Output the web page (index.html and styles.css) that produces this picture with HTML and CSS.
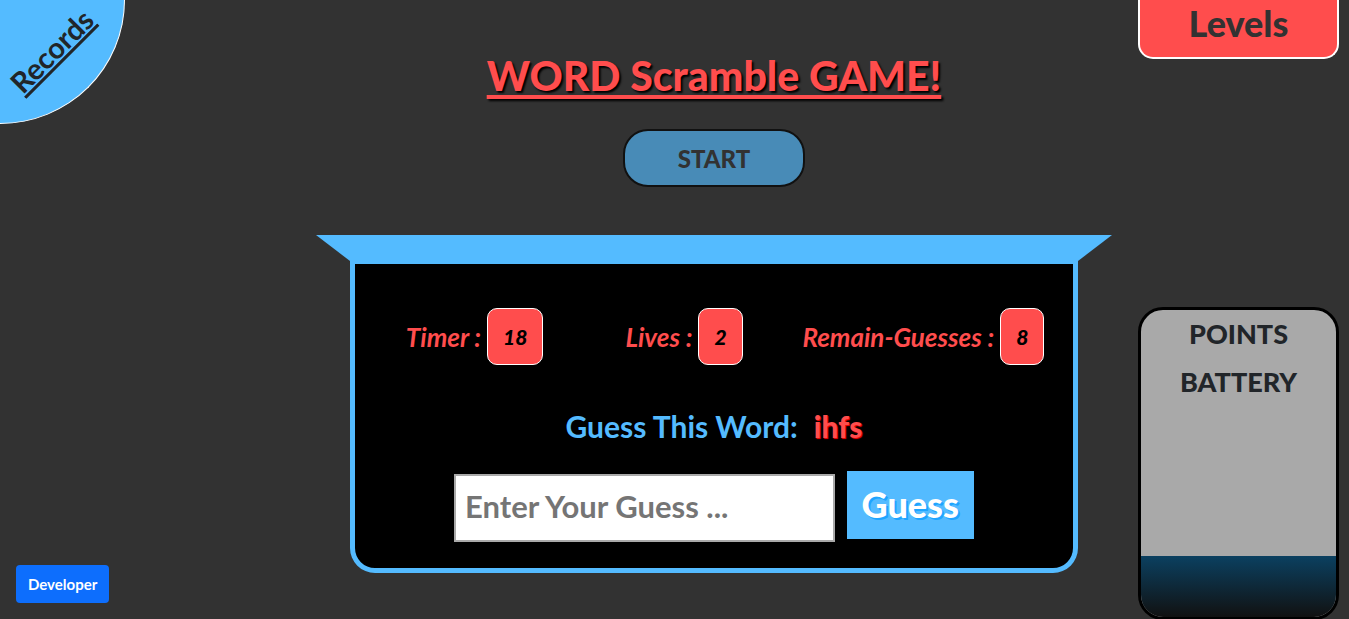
FILE: index.html
```html
<!DOCTYPE html>
<html lang="en">
<head>
<meta charset="utf-8">
<meta name="viewport" content="width=device-width, initial-scale=1">
<title>Word Scramble Game</title>
<link rel="stylesheet" href="styles.css">
</head>
<body>
<div class="page">
  <aside class="left">
    <a class="records" href="#records"><span class="records-text">Records</span></a>
    <button class="developer" type="button">Developer</button>
  </aside>
  <main class="center">
    <h1 class="title">WORD Scramble GAME!</h1>
    <button class="start" type="button" disabled>START</button>
    <section class="game">
      <div class="lid"></div>
      <div class="box">
        <div class="stats">
          <div class="stat"><span>Timer :</span><output class="value">18</output></div>
          <div class="stat"><span>Lives :</span><output class="value">2</output></div>
          <div class="stat"><span>Remain-Guesses :</span><output class="value">8</output></div>
        </div>
        <h2 class="prompt"><label for="guess">Guess This Word:</label><span class="word">ihfs</span></h2>
        <form class="guess-form">
          <input class="guess-input" id="guess" type="text" placeholder="Enter Your Guess ...">
          <button class="guess-button" type="button">Guess</button>
        </form>
      </div>
    </section>
  </main>
  <aside class="right">
    <button class="levels" type="button">Levels</button>
    <section class="battery">
      <h2 class="battery-title">POINTS<br>BATTERY</h2>
      <div class="charge" style="height: 20%"></div>
    </section>
  </aside>
</div>
</body>
</html>
```
FILE: styles.css
```css
* { box-sizing: border-box; }

body {
  margin: 0;
  background: #323232;
  color: #212529;
  font-family: Lato, "Liberation Sans", sans-serif;
  font-weight: 700;
  overflow: hidden;
}

h1, h2 { margin: 0; }
button, input { font: inherit; }

.page {
  display: grid;
  grid-template-columns: 350fr 728fr 271fr;
  min-height: 100vh;
}

.left, .right {
  display: flex;
  flex-direction: column;
  justify-content: space-between;
}

.left { align-items: flex-start; }

.records {
  display: flex;
  align-items: center;
  justify-content: center;
  width: 125px;
  height: 124px;
  padding: 0 20px 22px 0;
  background: #54bbff;
  border: solid #fff;
  border-width: 0 1px 1px 0;
  border-bottom-right-radius: 100%;
  color: #212529;
  font-size: 29px;
  line-height: 30px;
}

.records-text {
  transform: rotate(-45deg);
  text-decoration: underline;
  text-decoration-thickness: 3px;
}

.developer {
  margin: 16px;
  padding: 0 12px;
  height: 38px;
  border: 0;
  border-radius: 4px;
  background: #0d6efd;
  color: #fff;
  font-size: 15px;
}

.center {
  display: flex;
  flex-direction: column;
  align-items: center;
  min-width: 0;
}

.title {
  margin-top: 46px;
  color: #ff4d4d;
  font-size: 41px;
  font-weight: 900;
  line-height: 60px;
  text-decoration: underline;
  text-decoration-thickness: 4px;
  text-underline-offset: 4px;
  text-shadow: 2px 2px 2px #000;
  white-space: nowrap;
}

.start {
  width: 25%;
  height: 58px;
  margin-top: 23px;
  border: 2px solid #111;
  border-radius: 25px;
  background: #488bb7;
  color: #323232;
  font-size: 24px;
  font-weight: 900;
}

.game {
  align-self: stretch;
  margin-top: 48px;
}

.lid {
  height: 26px;
  margin: 0 -34px;
  background: #54bbff;
  clip-path: polygon(0 0, 100% 0, calc(100% - 34px) 100%, 34px 100%);
}

.box {
  padding: 44px 0 26px;
  background: #000;
  border: 5px solid #54bbff;
  border-top-width: 3px;
  border-radius: 0 0 25px 25px;
}

.stats {
  display: grid;
  grid-template-columns: 4fr 3fr 5fr;
}

.stat {
  display: flex;
  align-items: center;
  justify-content: center;
  gap: 6px;
  color: #ff4d4d;
  font-size: 26px;
  font-style: italic;
  white-space: nowrap;
}

.value {
  padding: 0 15px;
  border: 1px solid #fff;
  border-radius: 10px;
  background: #ff4d4d;
  color: #000;
  font-size: 21px;
  font-weight: 900;
  line-height: 55px;
}

.prompt {
  display: flex;
  justify-content: center;
  gap: 16px;
  margin: 37px 0 21px;
  color: #54bbff;
  font-size: 30px;
  line-height: 48px;
}

.word {
  color: #ff4d4d;
  font-weight: 900;
  text-shadow: 1px 1px 1px #f00;
}

.guess-form {
  display: flex;
  align-items: baseline;
  justify-content: center;
  gap: 12px;
}

.guess-input {
  width: 53%;
  height: 68px;
  padding: 0 9px 4px;
  border: 2px solid #a9a9a9;
  background: #fff;
  color: #212529;
  font-size: 31px;
}

.guess-input::placeholder { color: #757575; opacity: 1; }

.guess-button {
  height: 68px;
  padding: 0 15px 2px;
  border: 0;
  background: #54bbff;
  color: #fff;
  font-size: 36px;
  font-weight: 900;
  text-shadow: 2px 2px 0 #1fa5ff;
}

.right {
  padding: 0 10px 0 60px;
}

.levels {
  height: 59px;
  padding: 0 0 12px;
  border: 2px solid #fff;
  border-top: 0;
  border-radius: 0 0 15px 15px;
  background: #ff4d4d;
  color: #323232;
  font-size: 36px;
  font-weight: 900;
}

.battery {
  display: flex;
  flex-direction: column;
  justify-content: space-between;
  height: 313px;
  margin-bottom: -1px;
  border: 3px solid #000;
  border-radius: 25px;
  background: #a9a9a9;
  overflow: hidden;
}

.battery-title {
  font-size: 27px;
  font-weight: 900;
  line-height: 48px;
  text-align: center;
}

.charge { background: linear-gradient(#0b4060, #111); }
```
